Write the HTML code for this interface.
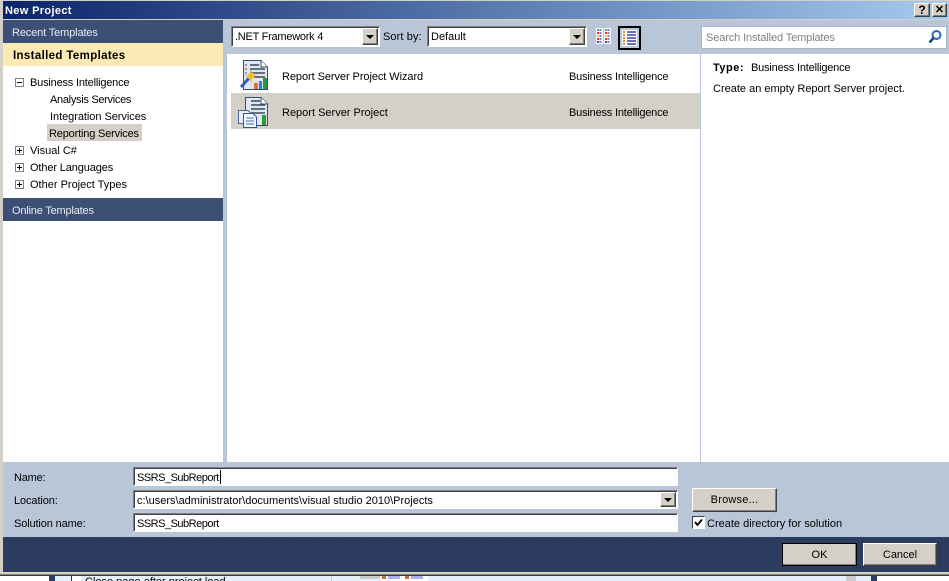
<!DOCTYPE html>
<html><head><meta charset="utf-8"><title>New Project</title>
<style>
html,body{margin:0;padding:0;background:#fff}
#r{position:relative;width:949px;height:581px;overflow:hidden;background:#d4d0c8;font:11px "Liberation Sans",sans-serif;color:#000}
#r div,#r svg,#r span.a{position:absolute}
.t{white-space:nowrap;line-height:14px;height:14px;margin-top:1px}
.w{color:#e6ebf3}
.in{background:#fff;box-sizing:border-box;border:1px solid;border-color:#808080 #fff #fff #808080;box-shadow:inset 1px 1px 0 #404040}
.btn{background:#d4d0c8;box-sizing:border-box;border:1px solid;border-color:#fff #404040 #404040 #fff;box-shadow:inset -1px -1px 0 #808080;text-align:center}
.pm{width:7px;height:7px;border:1px solid #808080;background:#fff}
.pm i{position:absolute;left:1px;top:3px;width:5px;height:1px;background:#000}
.pm b{position:absolute;left:3px;top:1px;width:1px;height:5px;background:#000}
.dd{background:#d4d0c8;border:1px solid;box-sizing:border-box;border-color:#fff #404040 #404040 #fff;box-shadow:inset -1px -1px 0 #808080}
.dd i{position:absolute;left:3px;top:6px;width:0;height:0;border-left:4px solid transparent;border-right:4px solid transparent;border-top:4px solid #000}
</style></head><body><div id="r">
<div style="left:0;top:0;width:949px;height:1px;background:#d4d0c8"></div>
<div style="left:3px;top:1px;width:946px;height:18px;background:linear-gradient(90deg,#0a246a,#a6caf0)"></div>
<div class="t" style="left:5px;top:3px;color:#fff;font-weight:bold;letter-spacing:.35px">New Project</div>
<div class="btn" style="left:914px;top:3px;width:16px;height:14px;font:bold 12px/12px 'Liberation Sans',sans-serif">?</div>
<div class="btn" style="left:932px;top:3px;width:15px;height:14px;font:bold 11px/12px 'Liberation Sans',sans-serif">✕</div>

<div style="left:3px;top:20px;width:946px;height:517px;background:#b9c6d8"></div>

<!-- sidebar -->
<div style="left:3px;top:20px;width:220px;height:442px;background:#fff"></div>
<div style="left:3px;top:20px;width:220px;height:23px;background:#3c5075"></div>
<div class="t w" style="left:12px;top:25px;letter-spacing:-.13px">Recent Templates</div>
<div style="left:3px;top:43px;width:220px;height:23px;background:#fde9b4"></div>
<div class="t" style="left:13px;top:48px;font-weight:bold;font-size:11.5px;letter-spacing:.35px">Installed Templates</div>
<div class="pm" style="left:15px;top:78px"><i></i></div>
<div class="t" style="left:30px;top:75px;letter-spacing:-.19px">Business Intelligence</div>
<div class="t" style="left:50px;top:92px;letter-spacing:-.3px">Analysis Services</div>
<div class="t" style="left:50px;top:109px;letter-spacing:-.05px">Integration Services</div>
<div style="left:47px;top:124px;width:95px;height:17px;background:#d4d0c8"></div>
<div class="t" style="left:49px;top:126px;letter-spacing:-.17px">Reporting Services</div>
<div class="pm" style="left:15px;top:146px"><i></i><b></b></div>
<div class="t" style="left:30px;top:143px">Visual C#</div>
<div class="pm" style="left:15px;top:163px"><i></i><b></b></div>
<div class="t" style="left:30px;top:160px;letter-spacing:-.13px">Other Languages</div>
<div class="pm" style="left:15px;top:180px"><i></i><b></b></div>
<div class="t" style="left:30px;top:177px">Other Project Types</div>
<div style="left:3px;top:198px;width:220px;height:23px;background:#3c5075"></div>
<div class="t w" style="left:12px;top:203px;letter-spacing:-.19px">Online Templates</div>

<!-- toolbar -->
<div class="in" style="left:231px;top:26px;width:149px;height:21px"></div>
<div class="t" style="left:235px;top:29px;letter-spacing:-.25px">.NET Framework 4</div>
<div class="dd" style="left:362px;top:28px;width:16px;height:17px"><i></i></div>
<div class="t" style="left:383px;top:29px;letter-spacing:.1px">Sort by:</div>
<div class="in" style="left:427px;top:26px;width:160px;height:21px"></div>
<div class="t" style="left:431px;top:29px">Default</div>
<div class="dd" style="left:569px;top:28px;width:16px;height:17px"><i></i></div>
<svg style="left:596px;top:28px" width="16" height="17" viewBox="0 0 16 17">
<rect width="7" height="16" fill="#fff"/><rect x="8" width="7" height="16" fill="#fff"/>
<g stroke-width="2"><path d="M1 2H3" stroke="#4a8"/><path d="M1 5H3" stroke="#e33"/><path d="M1 8H3" stroke="#ec3"/><path d="M1 11H3" stroke="#e33"/><path d="M1 14H3" stroke="#44c"/><path d="M9 2H11" stroke="#4a8"/><path d="M9 5H11" stroke="#e33"/><path d="M9 8H11" stroke="#ec3"/><path d="M9 11H11" stroke="#e33"/><path d="M9 14H11" stroke="#44c"/><path d="M4.500 1V15M12.500 1V15" stroke="#7a80d0" stroke-dasharray="2 1"/></g></svg>
<div style="left:618px;top:26px;width:23px;height:24px;box-sizing:border-box;border:2px solid #000"></div>
<svg style="left:622px;top:30px" width="15" height="16" viewBox="0 0 15 16"><rect width="15" height="16" fill="#fff"/><path d="M1 2H3M1 5H3M1 8H3M1 11H3M1 14H3" stroke="#d84" stroke-width="2"/><path d="M5 2H14M5 5H14M5 8H14M5 11H14M5 14H14" stroke="#6a70c0" stroke-width="2"/></svg>
<div style="left:701px;top:26px;width:246px;height:23px;background:#fff;box-sizing:border-box;border:1px solid #a9b5c6"></div>
<div class="t" style="left:706px;top:30px;color:#808080;letter-spacing:-.12px">Search Installed Templates</div>
<svg style="left:927px;top:29px" width="16" height="16" viewBox="0 0 16 16"><circle cx="9.500" cy="6" r="4" fill="none" stroke="#2a6ab0" stroke-width="2"/><path d="M6.500 9L2.500 13.500" stroke="#1c3f7a" stroke-width="2.500"/></svg>

<!-- center -->
<div style="left:227px;top:54px;width:473px;height:408px;background:#fff"></div>
<div style="left:231px;top:93px;width:469px;height:36px;background:#d4d0c8"></div>
<svg style="left:238px;top:59px" width="32" height="33" viewBox="0 0 32 33">
<path d="M5.500 1.500H23L29.500 8V30.500H5.500Z" fill="#dfe7f4" stroke="#3a4a6a"/><path d="M23 1.500V8H29.500" fill="#fff" stroke="#3a4a6a"/>
<path d="M12 6H21M12 10H27M12 14H27M12 18H27" stroke="#3a4a55" stroke-width="1.500"/><path d="M7 6H9M7 10H9M7 14H9" stroke="#445"/>
<rect x="16" y="24" width="4" height="6" fill="#e8731e"/><rect x="21" y="22" width="3" height="8" fill="#2a7fd8"/><rect x="25" y="19" width="4" height="11" fill="#2a9a3a"/>
<path d="M3 28L12 18" stroke="#2c5cc0" stroke-width="3"/><circle cx="13" cy="17" r="3.500" fill="#f5d040"/><path d="M13 11V23M7 17H19" stroke="#f0a020"/></svg>
<svg style="left:237px;top:96px" width="33" height="32" viewBox="0 0 33 32">
<path d="M8.500 1.500H24L30.500 8V29.500H8.500Z" fill="#dfe7f4" stroke="#3a4a6a"/><path d="M24 1.500V8H30.500" fill="#fff" stroke="#3a4a6a"/>
<path d="M14 5H23M14 9H28M14 13H28M14 17H28" stroke="#3a4a55" stroke-width="1.500"/><rect x="25" y="19" width="4" height="10" fill="#2a9a3a"/>
<path d="M1.500 14.500H11L13.500 17V27.500H1.500Z" fill="#e9effa" stroke="#4a6a9a"/><path d="M6.500 17.500H16L19.500 21V31.500H6.500Z" fill="#f4f7fd" stroke="#35558a"/><path d="M9 22H17M9 25H17M9 28H17" stroke="#3a6ac0"/></svg>
<div class="t" style="left:282px;top:69px;letter-spacing:-.07px">Report Server Project Wizard</div>
<div class="t" style="left:569px;top:69px;letter-spacing:-.19px">Business Intelligence</div>
<div class="t" style="left:282px;top:105px">Report Server Project</div>
<div class="t" style="left:569px;top:105px;letter-spacing:-.19px">Business Intelligence</div>

<!-- right -->
<div style="left:701px;top:54px;width:248px;height:408px;background:#fff"></div>
<div class="t" style="left:713px;top:60px;font-weight:bold;letter-spacing:.5px">Type:</div>
<div class="t" style="left:751px;top:60px;letter-spacing:-.19px">Business Intelligence</div>
<div class="t" style="left:713px;top:81px">Create an empty Report Server project.</div>

<!-- form -->
<div class="t" style="left:14px;top:470px;letter-spacing:-.2px">Name:</div>
<div class="t" style="left:14px;top:493px;letter-spacing:-.1px">Location:</div>
<div class="t" style="left:14px;top:516px;letter-spacing:-.13px">Solution name:</div>
<div class="in" style="left:133px;top:467px;width:545px;height:19px"></div>
<div class="t" style="left:137px;top:470px;letter-spacing:-.5px">SSRS_SubReport</div>
<div style="left:220px;top:470px;width:1px;height:14px;background:#000"></div>
<div class="in" style="left:133px;top:490px;width:545px;height:19px"></div>
<div class="t" style="left:137px;top:493px">c:\users\administrator\documents\visual studio 2010\Projects</div>
<div class="dd" style="left:660px;top:492px;width:16px;height:15px"><i style="top:5px"></i></div>
<div class="in" style="left:133px;top:513px;width:545px;height:19px"></div>
<div class="t" style="left:137px;top:516px;letter-spacing:-.5px">SSRS_SubReport</div>
<div class="btn" style="left:692px;top:488px;width:85px;height:24px;line-height:23px;letter-spacing:.2px">Browse...</div>
<div style="left:692px;top:516px;width:13px;height:13px;background:#fff;box-sizing:border-box;border:1px solid;border-color:#404040 #fff #fff #404040"></div>
<svg style="left:694px;top:518px" width="9" height="9" viewBox="0 0 9 9"><path d="M1 4L3.500 7L8 1.500" fill="none" stroke="#000" stroke-width="1.800"/></svg>
<div class="t" style="left:707px;top:516px">Create directory for solution</div>

<!-- footer -->
<div style="left:3px;top:537px;width:946px;height:35px;background-color:#2a3b5e;background-image:radial-gradient(circle at 1px 1px,#303f63 .8px,transparent 1px);background-size:3px 3px"></div>
<div class="btn" style="left:782px;top:543px;width:75px;height:23px;line-height:23px;outline:1px solid #000;outline-offset:-1px">OK</div>
<div class="btn" style="left:863px;top:543px;width:74px;height:23px;line-height:23px">Cancel</div>

<!-- behind -->
<div style="left:0;top:572px;width:949px;height:2px;background:#d4d0c8"></div>
<div style="left:0;top:574px;width:949px;height:1px;background:#808080"></div>
<div style="left:0;top:575px;width:949px;height:1px;background:#404040"></div>
<div style="left:0;top:576px;width:949px;height:5px;background:#e6f0fd"></div>
<div style="left:0;top:576px;width:49px;height:5px;background:#fff"></div>
<div style="left:49px;top:576px;width:6px;height:5px;background:#2a3b6a"></div>
<div style="left:71px;top:576px;width:9px;height:5px;background:#fff;border-left:1px solid #333"></div>
<div class="t" style="left:85px;top:575px;margin-top:0;clip-path:inset(1px 0 0 0)">Close page after project load</div>
<div style="left:331px;top:576px;width:1px;height:5px;background:#b9d0ee"></div>
<div style="left:360px;top:576px;width:20px;height:3px;background:#ccc"></div>
<div style="left:382px;top:576px;width:22px;height:5px;background:#fff"></div>
<div style="left:382px;top:576px;width:4px;height:3px;background:#c8703a"></div>
<div style="left:388px;top:576px;width:12px;height:3px;background:#aab0f0"></div>
<div style="left:404px;top:576px;width:24px;height:5px;background:#fff"></div>
<div style="left:405px;top:576px;width:4px;height:3px;background:#c8703a"></div>
<div style="left:411px;top:576px;width:12px;height:3px;background:#aab0f0"></div>
<div style="left:846px;top:576px;width:10px;height:5px;background:#ccc"></div>
<div style="left:871px;top:576px;width:6px;height:5px;background:#2a3b6a"></div>
<div style="left:877px;top:576px;width:72px;height:5px;background:#fff"></div>
</div></body></html>
